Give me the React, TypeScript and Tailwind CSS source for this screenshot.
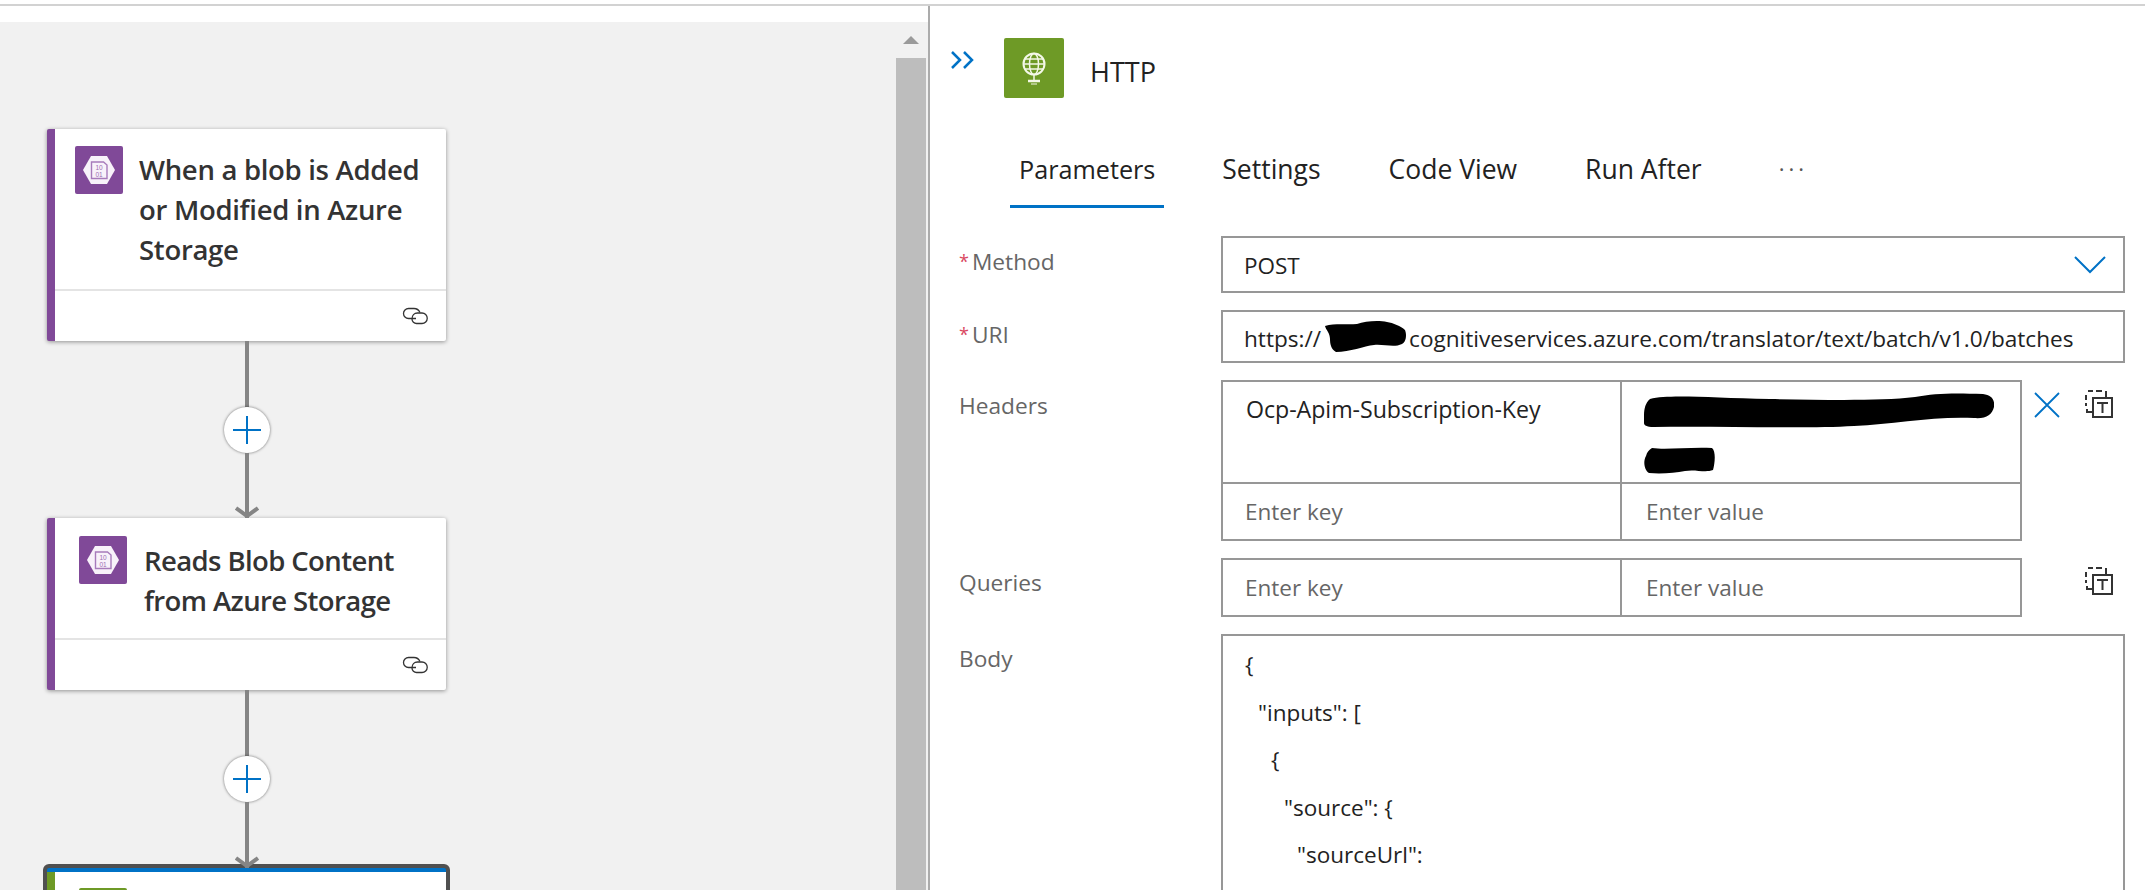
function BlobIcon() {
  return (
    <div className="w-12 h-12 rounded-[2px] bg-[#804998] flex items-center justify-center shrink-0">
      <svg width="34" height="30" viewBox="0 0 34 30">
        <path d="M9 1h16l8 14-8 14H9L1 15z" fill="#f8f2fa" />
        <path d="M9.500 7h12l3.500 3v13.500H9.500z" fill="none" stroke="#a77bbb" strokeWidth="1.400" />
        <text x="17" y="14.500" textAnchor="middle" fontSize="6.500" fill="#9c6db2" fontFamily="Liberation Sans, sans-serif">10</text>
        <text x="17" y="21.500" textAnchor="middle" fontSize="6.500" fill="#9c6db2" fontFamily="Liberation Sans, sans-serif">01</text>
      </svg>
    </div>
  );
}

function LinkIcon() {
  return (
    <svg width="26" height="18" viewBox="0 0 26 18" fill="none" stroke="#333" strokeWidth="1.300">
      <path d="M14 11.500H6.500a5 5 0 0 1 0-10H12c3 0 5 1.800 6 4" />
      <path d="M10 12c0-3.500 2.200-6 5.500-6H20a5 5 0 0 1 0 10.500h-5.500c-2.300 0-4.500-2-4.500-4.500z" />
    </svg>
  );
}

function Card({
  title,
  iconClass,
  textClass,
  bodyClass,
}: {
  title: string[];
  iconClass: string;
  textClass: string;
  bodyClass: string;
}) {
  return (
    <div className="w-[399px] shrink-0 bg-white rounded-[2px] shadow-[0_1px_4px_rgba(0,0,0,0.4)] border-l-8 border-[#804998]">
      <div className={`flex ${bodyClass} border-b-2 border-[#e4e4e4]`}>
        <div className={iconClass}>
          <BlobIcon />
        </div>
        <div className={`${textClass} text-[27.500px] leading-[40px] font-semibold text-[#333]`}>
          {title.map((t) => (
            <div key={t} className="whitespace-nowrap">{t}</div>
          ))}
        </div>
      </div>
      <div className="h-[50px] flex justify-end items-center pr-[18px]">
        <LinkIcon />
      </div>
    </div>
  );
}

function Connector({ heightClass }: { heightClass: string }) {
  return (
    <div className={`w-[399px] shrink-0 ${heightClass} flex flex-col items-center relative z-10`}>
      <div className="w-1 flex-1 bg-[#858585]" />
      <div className="w-[46px] h-[46px] rounded-full bg-white shadow-[0_0_3px_rgba(0,0,0,0.55)] flex items-center justify-center shrink-0">
        <svg width="28" height="28" viewBox="0 0 28 28" stroke="#0072c6" strokeWidth="2">
          <path d="M0 14h28M14 0v28" />
        </svg>
      </div>
      <div className="w-1 flex-1 bg-[#858585]" />
      <svg className="absolute bottom-0 left-[188px]" width="24" height="12" viewBox="0 0 24 12" fill="none" stroke="#858585" strokeWidth="4">
        <path d="M1 2l11 8 11-8" />
      </svg>
    </div>
  );
}

function TemplateIcon() {
  return (
    <svg width="30" height="30" viewBox="0 0 30 30" fill="none" stroke="#333">
      <path d="M2 10V5M2 16v-3M4 1h5M12 1h6M22 1v7M3 19v3h5" strokeWidth="2" />
      <rect x="9" y="8" width="19" height="19" strokeWidth="2" />
      <path d="M13 13h11M18.500 13v10" strokeWidth="2" />
    </svg>
  );
}

function Label({ text, required }: { text: string; required?: boolean }) {
  return (
    <div className="w-[262px] shrink-0 text-[22.700px] leading-[30px] text-[#666] whitespace-nowrap">
      {required && <span className="text-[#d9485f] text-[18px] align-[2px] mr-[3px]">*</span>}
      {text}
    </div>
  );
}

const tabs = ["Settings", "Code View", "Run After"];
const bodyLines = [
  { text: "{", indent: "pl-0" },
  { text: '"inputs": [', indent: "pl-[13px]" },
  { text: "{", indent: "pl-[26px]" },
  { text: '"source": {', indent: "pl-[39px]" },
  { text: '"sourceUrl":', indent: "pl-[52px]" },
];

export default function App() {
  return (
    <div className="w-[2145px] h-[890px] overflow-hidden bg-white font-['Open_Sans',sans-serif]">
      <div className="h-1" />
      <div className="h-0.5 bg-[#d2d2d2]" />
      <div className="flex h-[884px]">
        {/* designer canvas */}
        <div className="w-[930px] shrink-0 flex flex-col pt-[16px]">
          <div className="flex-1 flex bg-[#f1f1f1] min-h-0 overflow-hidden">
            <div className="w-[896px] pl-[47px] pt-[107px] flex flex-col">
              <Card
                title={["When a blob is Added", "or Modified in Azure", "Storage"]}
                iconClass="pl-5 pt-[17px]"
                textClass="pl-4 pt-[21px] tracking-[-0.3px]"
                bodyClass="h-[162px]"
              />
              <Connector heightClass="h-[177px]" />
              <Card
                title={["Reads Blob Content", "from Azure Storage"]}
                iconClass="pl-6 pt-[18px]"
                textClass="pl-[17px] pt-[23px] tracking-[-0.6px]"
                bodyClass="h-[122px]"
              />
              <Connector heightClass="h-[178px]" />
              <div className="w-[407px] shrink-0 -ml-1 -mt-1 border-4 border-[#505050] rounded-[6px] bg-[#0072c6] pt-1">
                <div className="h-[100px] bg-white border-l-8 border-[#6e9a26] pl-6 pt-[16px]">
                  <div className="w-12 h-12 rounded-[2px] bg-[#6e9a26]" />
                </div>
              </div>
            </div>
            <div className="w-[30px] shrink-0 flex flex-col items-center">
              <svg className="mt-[14px] mb-[14px]" width="16" height="8" viewBox="0 0 16 8">
                <path d="M8 0l8 8H0z" fill="#9a9a9a" />
              </svg>
              <div className="w-[30px] flex-1 bg-[#bdbdbd]" />
            </div>
            <div className="w-[2px] shrink-0" />
          </div>
        </div>

        {/* action details */}
        <div className="flex-1 min-w-0 border-l-2 border-[#ababab] -ml-[2px]">
          <div className="flex pt-[32px]">
            <svg className="ml-[20px] mt-[13px]" width="24" height="18" viewBox="0 0 24 18" fill="none" stroke="#0072c6" strokeWidth="2.500">
              <path d="M2 1l8 8-8 8M14 1l8 8-8 8" />
            </svg>
            <div className="ml-[30px] w-[60px] h-[60px] rounded-[2px] bg-[#6e9a26] flex items-center justify-center">
              <svg width="28" height="34" viewBox="0 0 28 34" fill="none" stroke="#f4f8e8" strokeWidth="1.500">
                <circle cx="14" cy="13" r="10.500" strokeWidth="2" />
                <ellipse cx="14" cy="13" rx="4.500" ry="10.500" />
                <path d="M3.500 13h21M5 8h18M5 18h18M14 24v5" />
                <path d="M8 30h12" strokeWidth="2.500" />
                <path d="M11 33h6" strokeWidth="1" />
              </svg>
            </div>
            <div className="ml-[26px] pt-[16px] text-[27px] leading-[36px] text-[#222]">HTTP</div>
          </div>

          <div className="flex ml-[80px] mt-[37px] h-[73px] gap-[50px] text-[26.500px] leading-[34px] text-[#222]">
            <div className="px-[9px] pt-[17px] border-b-[3px] border-[#0072c6] h-[73px] whitespace-nowrap text-[25.200px] -mr-px">Parameters</div>
            {tabs.map((t) => (
              <div key={t} className="px-[9px] pt-[17px] whitespace-nowrap">{t}</div>
            ))}
            <div className="pt-[16px] ml-[18px] text-[#555] tracking-[4px] text-[22px]">···</div>
          </div>

          <div className="flex flex-col gap-[17px] pl-[29px] pt-[28px]">
            <div className="flex">
              <div className="pt-[10px]"><Label text="Method" required /></div>
              <div className="w-[904px] h-[57px] border-2 border-[#979797] flex items-center justify-between pl-[21px] pr-[17px] text-[22.500px] text-[#222]">
                <span className="pt-[2px]">POST</span>
                <svg width="32" height="18" viewBox="0 0 32 18" fill="none" stroke="#0072c6" strokeWidth="2">
                  <path d="M1 1l15 15L31 1" />
                </svg>
              </div>
            </div>
            <div className="flex">
              <div className="pt-[9px]"><Label text="URI" required /></div>
              <div className="w-[904px] h-[53px] border-2 border-[#979797] flex items-center pl-[21px] text-[22.600px] text-[#222] whitespace-nowrap">
                <span className="pt-[4px]">https://</span>
                <svg className="mx-[1px]" width="86" height="33" viewBox="0 0 86 33">
                  <path d="M3 6c10-3 22-1 32-2 8-3 22-4 30-2 6 1 14 4 18 8 2 5 1 12-3 14-8 4-18 0-28 1-10 1-24 7-38 7-5-3-6-8-6-13 0-6-4-9-5-13z" fill="#000" />
                </svg>
                <span className="pt-[4px]">cognitiveservices.azure.com/translator/text/batch/v1.0/batches</span>
              </div>
            </div>
            <div className="flex">
              <div className="pt-[11px]"><Label text="Headers" /></div>
              <div className="w-[801px] border-2 border-[#979797] grid grid-cols-[399px_1fr] grid-rows-[102px_55px] text-[22.500px]">
                <div className="border-r-2 border-b-2 border-[#979797] pl-[23px] pt-[11px] text-[#222] leading-[32px] text-[23.200px] tracking-[-0.05px]">Ocp-Apim-Subscription-Key</div>
                <div className="border-b-2 border-[#979797] pl-[22px] pt-[11px] flex flex-col gap-[18px]">
                  <svg width="350" height="36" viewBox="0 0 350 36">
                    <path d="M6 6c20-5 60-1 120 0 60 1 110 2 145-2 20-4 40-4 68-3 8 1 12 5 11 13-2 8-8 12-20 11-40-2-80 6-120 8-50 3-130 0-200 1-8 0-10-2-10-4C0 22-1 12 6 6z" fill="#000" />
                  </svg>
                  <svg width="72" height="27" viewBox="0 0 72 27">
                    <path d="M8 1c14 2 36-1 60 0 4 3 3 15 1 22-8 3-18-1-28 1-10 2-24 3-36 2C0 23-1 14 2 9c1-4 3-6 6-8z" fill="#000" />
                  </svg>
                </div>
                <div className="border-r-2 border-[#979797] pl-[22px] flex items-center text-[#666]">Enter key</div>
                <div className="pl-[24px] flex items-center text-[#666]">Enter value</div>
              </div>
              <div className="pl-[12px] pt-[12px]">
                <svg width="26" height="26" viewBox="0 0 26 26" stroke="#0072c6" strokeWidth="1.800">
                  <path d="M1 1l24 24M25 1L1 25" />
                </svg>
              </div>
              <div className="pl-[24px] pt-[10px]"><TemplateIcon /></div>
            </div>
            <div className="flex">
              <div className="pt-[10px]"><Label text="Queries" /></div>
              <div className="w-[801px] h-[59px] border-2 border-[#979797] grid grid-cols-[399px_1fr] text-[22.500px] text-[#666]">
                <div className="border-r-2 border-[#979797] pl-[22px] flex items-center">Enter key</div>
                <div className="pl-[24px] flex items-center">Enter value</div>
              </div>
              <div className="pl-[62px] pt-[9px]"><TemplateIcon /></div>
            </div>
            <div className="flex">
              <div className="pt-[10px]"><Label text="Body" /></div>
              <div className="w-[904px] h-[300px] border-2 border-[#979797] pl-[22px] pt-[5px] text-[22.500px] leading-[47.500px] text-[#222] whitespace-nowrap">
                {bodyLines.map((l, i) => (
                  <div key={i} className={l.indent}>{l.text}</div>
                ))}
              </div>
            </div>
          </div>
        </div>
      </div>
    </div>
  );
}
